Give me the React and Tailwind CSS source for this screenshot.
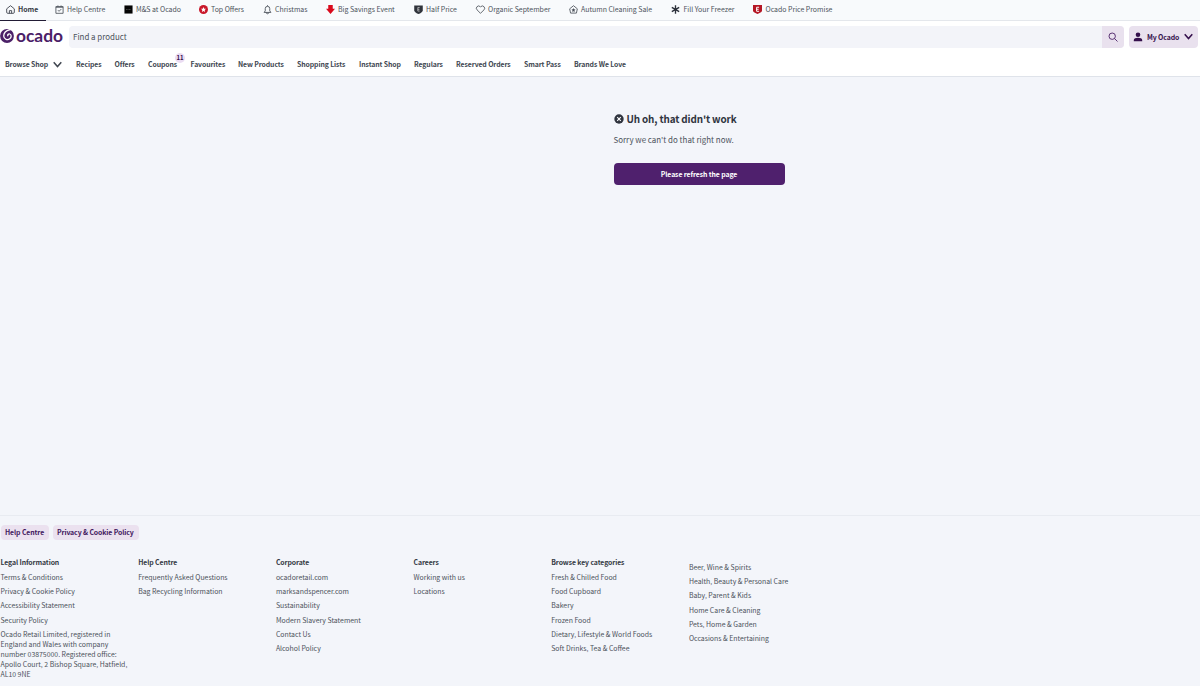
import clsx from 'clsx';

const topLinks = [
  { label: 'Home', icon: 'home', width: 'w-[49px]', active: true },
  { label: 'Help Centre', icon: 'help', width: 'w-[69px]' },
  { label: 'M&S at Ocado', icon: 'ms', width: 'w-[75px]' },
  { label: 'Top Offers', icon: 'star', width: 'w-[64px]' },
  { label: 'Christmas', icon: 'bell', width: 'w-[63px]' },
  { label: 'Big Savings Event', icon: 'arrow', width: 'w-[88px]' },
  { label: 'Half Price', icon: 'half', width: 'w-[62px]' },
  { label: 'Organic September', icon: 'heart', width: 'w-[93px]' },
  { label: 'Autumn Cleaning Sale', icon: 'house', width: 'w-[102.5px]' },
  { label: 'Fill Your Freezer', icon: 'snow', width: 'w-[82px]' },
  { label: 'Ocado Price Promise', icon: 'promise', width: 'w-[90px]' },
];

const navLinks = [
  { label: 'Browse Shop', width: 'w-[71px]', chevron: true },
  { label: 'Recipes', width: 'w-[38.5px]' },
  { label: 'Offers', width: 'w-[33.5px]' },
  { label: 'Coupons', width: 'w-[42.5px]', badge: 11 },
  { label: 'Favourites', width: 'w-[47.5px]' },
  { label: 'New Products', width: 'w-[59px]' },
  { label: 'Shopping Lists', width: 'w-[62px]' },
  { label: 'Instant Shop', width: 'w-[55px]' },
  { label: 'Regulars', width: 'w-[42px]' },
  { label: 'Reserved Orders', width: 'w-[68px]' },
  { label: 'Smart Pass', width: 'w-[50px]' },
  { label: 'Brands We Love', width: 'w-[60px]' },
];

const footerColumns = [
  {
    title: 'Legal Information',
    links: ['Terms & Conditions', 'Privacy & Cookie Policy', 'Accessibility Statement', 'Security Policy'],
    note: ['Ocado Retail Limited, registered in', 'England and Wales with company', 'number 03875000. Registered office:', 'Apollo Court, 2 Bishop Square, Hatfield,', 'AL10 9NE'],
  },
  { title: 'Help Centre', links: ['Frequently Asked Questions', 'Bag Recycling Information'] },
  {
    title: 'Corporate',
    links: ['ocadoretail.com', 'marksandspencer.com', 'Sustainability', 'Modern Slavery Statement', 'Contact Us', 'Alcohol Policy'],
  },
  { title: 'Careers', links: ['Working with us', 'Locations'] },
  {
    title: 'Browse key categories',
    links: ['Fresh & Chilled Food', 'Food Cupboard', 'Bakery', 'Frozen Food', 'Dietary, Lifestyle & World Foods', 'Soft Drinks, Tea & Coffee'],
  },
  {
    links: ['Beer, Wine & Spirits', 'Health, Beauty & Personal Care', 'Baby, Parent & Kids', 'Home Care & Cleaning', 'Pets, Home & Garden', 'Occasions & Entertaining'],
  },
];

const iconShapes = {
  home: <path d="M1.500 8.500 10 1.500l8.500 7V16a2.500 2.500 0 0 1-2.500 2.500H4A2.500 2.500 0 0 1 1.500 16ZM7.500 18.500v-6h5v6" />,
  help: <path d="M2 3.500h16v15H2ZM2 5h16M6.500 1v3M13.500 1v3M6.500 11.500l2.500 2.500 5-5" />,
  ms: (
    <>
      <path d="M1 1h18v18H1Z" fill="#050505" stroke="none" />
      <path d="M5 10h10" stroke="#555" strokeWidth="2" strokeDasharray="2 1" />
    </>
  ),
  star: (
    <>
      <circle cx="10" cy="10" r="10" fill="#c9182b" stroke="none" />
      <path d="m10 4.500 1.700 3.700 4 .4-3 2.700.9 4-3.600-2-3.600 2 .9-4-3-2.700 4-.4Z" fill="#fff" stroke="none" />
    </>
  ),
  bell: <path d="M10 .5v2M5 13V8a5 5 0 0 1 10 0v5l2.500 3.500h-15ZM7.500 17a2.500 2.500 0 0 0 5 0" strokeWidth="2" />,
  arrow: <path d="M5 0h10v8.500h5L10 20 0 8.500h5Z" fill="#d90a1c" stroke="none" />,
  half: (
    <>
      <path d="M.5 1h19v11c0 3.500-5 6-9.500 8C5.500 18 .5 15.500.5 12Z" fill="#30343b" stroke="none" />
      <path d="M12.500 5.500H8.500v8h4M8.500 9.500h3.500" stroke="#ddd" strokeWidth="1.500" />
    </>
  ),
  heart: <path d="M10 18.500 2.300 10.800a5 5 0 0 1 0-7.100 5 5 0 0 1 7.100 0l.6.6.6-.6a5 5 0 0 1 7.100 0 5 5 0 0 1 0 7.100Z" />,
  house: (
    <>
      <path d="M1.500 8.500 10 1.500l8.500 7L16.500 18h-13Z" />
      <path d="m10 6.500 1.400 3 3.100.5-2.300 2.200.6 3.200L10 13.900l-2.800 1.500.6-3.200L5.500 10l3.100-.5Z" fill="currentColor" stroke="none" />
    </>
  ),
  snow: <path d="M10 .5v19M1.800 5.200l16.400 9.600M18.200 5.200 1.800 14.800" stroke="#2b303a" strokeWidth="3" />,
  promise: (
    <>
      <path d="M0 0h20v13c0 3.500-5.500 5-10 7-4.500-2-10-3.500-10-7Z" fill="#b51725" stroke="none" />
      <path d="M13.500 5H8v9h5.500M8 9.500h4.500" stroke="#fff" strokeWidth="2.200" />
    </>
  ),
};

function TopIcon({ name }) {
  return (
    <svg viewBox="0 0 20 20" className="size-[9px] shrink-0 overflow-visible" fill="none" stroke="currentColor" strokeWidth="1.900" strokeLinejoin="round">
      {iconShapes[name]}
    </svg>
  );
}

function Chevron() {
  return (
    <svg viewBox="0 0 10 10" className="size-[9px] shrink-0" fill="none" stroke="currentColor" strokeWidth="1.700">
      <path d="m.8 2.500 4.200 4.700 4.200-4.700" />
    </svg>
  );
}

function TopBar() {
  return (
    <nav className="flex h-[21px] border-b border-[#e4e7ec] bg-[#f8fafc] text-[6.950px] text-[#4c525b]">
      {topLinks.map(({ label, icon, width, active }) => (
        <a key={label} className={clsx('relative flex shrink-0 items-center gap-[3.500px] pl-[5.500px] pb-[2px]', width, active && 'font-bold tracking-[-0.05px] text-[#363b45]')}>
          <TopIcon name={icon} />
          {label}
          {active && <span className="absolute -bottom-px left-0 h-[1.500px] w-[46px] bg-[#221c35]" />}
        </a>
      ))}
    </nav>
  );
}

function Logo() {
  return (
    <a className="flex w-[69px] shrink-0 items-center pb-px text-[#4b2067]">
      <svg viewBox="0 0 28 28" className="size-[14px] shrink-0">
        <circle cx="14" cy="14" r="13.800" fill="currentColor" />
        <path d="M21 1C12 3 7 8 7.500 14.500c.5 6 7.500 8.500 12 5 4-3 3.500-8.500 0-9.500-3-.8-5 2-3.500 4.500" fill="none" stroke="#fff" strokeWidth="2.600" />
      </svg>
      <span className="ml-[2px] font-['Lato',sans-serif] text-[17.400px] leading-[20px] font-bold">ocado</span>
    </a>
  );
}

function Header() {
  return (
    <header className="h-[56px] border-b border-[#dfe3ea] bg-white">
      <div className="flex h-[31px] items-center pr-[2px]">
        <Logo />
        <div className="flex h-[22px] flex-1 overflow-hidden rounded bg-[#f3f4f9]">
          <span className="flex-1 pl-1 text-[7.950px] leading-[21px] text-[#4c525b]">Find a product</span>
          <button className="flex w-[22px] items-center justify-center bg-[#e9e1ee] text-[#4b2067]">
            <svg viewBox="0 0 10 10" className="size-[10px]" fill="none" stroke="currentColor" strokeWidth=".9">
              <circle cx="4.200" cy="4.200" r="3.200" />
              <path d="m6.500 6.500 3 3" />
            </svg>
          </button>
        </div>
        <button className="ml-[5px] flex h-[22px] w-[69px] items-center rounded bg-[#e9e1ee] pl-[4px] text-[6.900px] font-bold tracking-[-0.1px] text-[#35104c]">
          <svg viewBox="0 0 10 10" className="size-[10px] shrink-0" fill="currentColor">
            <circle cx="5" cy="2.800" r="2.300" />
            <path d="M.8 9.200V8c0-1.500 2-2.300 4.200-2.300S9.200 6.500 9.200 8v1.200Z" />
          </svg>
          <span className="w-[41px] shrink-0 pl-1 text-left">My Ocado</span>
          <Chevron />
        </button>
      </div>
      <nav className="flex h-[24px] items-center pl-[5px] text-[6.900px] font-bold tracking-[-0.1px] text-[#414751]">
        {navLinks.map(({ label, width, chevron, badge }) => (
          <a key={label} className={clsx('relative flex shrink-0 items-center', width)}>
            <span className={clsx(chevron && 'w-[48px]')}>{label}</span>
            {chevron && <Chevron />}
            {badge && (
              <span className="absolute -top-[6px] left-[27px] flex size-[10px] items-center justify-center rounded-full bg-[#eadcf2] text-[6px] text-[#35104c]">
                {badge}
              </span>
            )}
          </a>
        ))}
      </nav>
    </header>
  );
}

function ErrorMessage() {
  return (
    <main className="h-[438px] pt-[34px] pl-[613.500px]">
      <h1 className="flex items-center gap-[3px] text-[9.900px] leading-4 font-bold tracking-[-0.13px] text-[#2f343e]">
        <svg viewBox="0 0 10 10" className="size-[10px]">
          <circle cx="5" cy="5" r="4.700" fill="currentColor" />
          <path d="m3.200 3.200 3.600 3.600M6.800 3.200 3.200 6.800" stroke="#fff" strokeWidth="1.100" />
        </svg>
        Uh oh, that didn't work
      </h1>
      <p className="mt-[7px] text-[7.950px] leading-3 text-[#4c525b]">Sorry we can't do that right now.</p>
      <button className="mt-[17px] h-[22px] w-[171px] rounded bg-[#4f206d] text-[6.900px] font-bold tracking-[-0.1px] text-white">Please refresh the page</button>
    </main>
  );
}

function Footer() {
  return (
    <footer className="h-[171px] border-t border-[#e8ebf1] pt-[9px] text-[#4c525b]">
      <div className="flex gap-1 pl-[0.500px]">
        {['Help Centre', 'Privacy & Cookie Policy'].map((label) => (
          <a
            key={label}
            className={clsx('h-[15px] rounded bg-[#ebe1ef] pl-[4.500px] leading-[15px] font-bold tracking-[-0.1px] text-[#42185e]', label === 'Help Centre' ? 'w-[48px]' : 'w-[86px]')}
          >
            {label}
          </a>
        ))}
      </div>
      <div className="mt-[15px] grid grid-cols-[repeat(6,137.700px)] pl-[0.500px]">
        {footerColumns.map(({ title, links, note }) => (
          <div key={title ?? links[0]} className={clsx(!title && 'pt-[4.500px]')}>
            {title && <h2 className="h-[14.600px] leading-[14px] font-bold tracking-[-0.1px] text-[#353a44]">{title}</h2>}
            <ul>
              {links.map((link) => (
                <li key={link} className="h-[14.350px] leading-[14px]">{link}</li>
              ))}
            </ul>
            {note && (
              <p className="pt-[2px] leading-[10px]">
                {note.map((line) => (
                  <span key={line} className="block">{line}</span>
                ))}
              </p>
            )}
          </div>
        ))}
      </div>
    </footer>
  );
}

export default function App() {
  return (
    <div className="h-[686px] overflow-hidden bg-[#f3f5fa] font-['Noto_Sans_CJK_SC',sans-serif] text-[6.900px] leading-[10px] whitespace-nowrap">
      <TopBar />
      <Header />
      <ErrorMessage />
      <Footer />
    </div>
  );
}
